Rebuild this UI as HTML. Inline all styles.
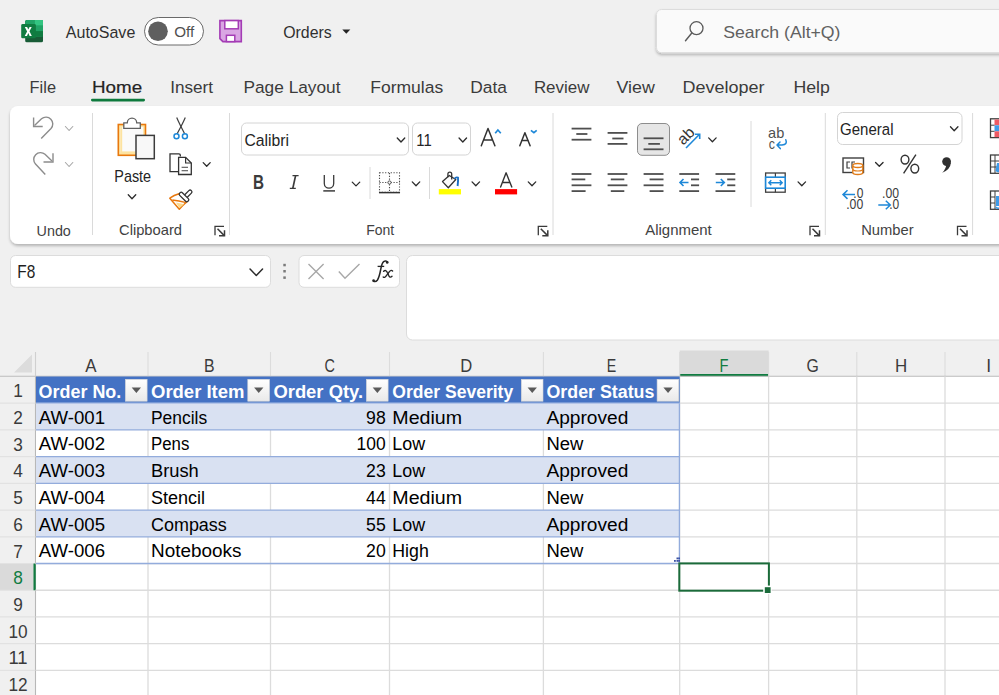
<!DOCTYPE html><html><head><meta charset="utf-8"><style>html,body{margin:0;padding:0;background:#f0f0f0;overflow:hidden}svg{display:block}</style></head><body>
<svg width="999" height="695" viewBox="0 0 999 695">
<defs><filter id="sh" x="-5%" y="-20%" width="110%" height="140%"><feGaussianBlur in="SourceAlpha" stdDeviation="1.5"/><feOffset dy="1.5"/><feComponentTransfer><feFuncA type="linear" slope="0.25"/></feComponentTransfer><feMerge><feMergeNode/><feMergeNode in="SourceGraphic"/></feMerge></filter><linearGradient id="fbtn" x1="0" y1="0" x2="0" y2="1"><stop offset="0" stop-color="#ffffff"/><stop offset="1" stop-color="#e9e9e9"/></linearGradient></defs>
<rect x="0" y="0" width="999" height="695" fill="#f0f0f0" stroke="none" stroke-width="1" rx="0" />
<rect x="25.2" y="20" width="17.8" height="22.3" fill="#185c37" stroke="none" stroke-width="1" rx="1.6" />
<rect x="25.2" y="20" width="17.8" height="16.5" fill="#21a366" stroke="none" stroke-width="1" rx="1.6" />
<rect x="34.9" y="20" width="8.1" height="5.6" fill="#33c481" stroke="none" stroke-width="1" rx="0" />
<rect x="34.9" y="25.6" width="8.1" height="5.5" fill="#21a366" stroke="none" stroke-width="1" rx="0" />
<rect x="34.9" y="31.1" width="8.1" height="5.4" fill="#107c41" stroke="none" stroke-width="1" rx="0" />
<rect x="21.2" y="24" width="14.7" height="14.3" fill="#107c41" stroke="none" stroke-width="1" rx="1.4" />
<path d="M24.8 26.9 H27.1 L28.3 29.6 L29.6 26.9 H31.7 L29.5 31.3 L31.8 35.9 H29.6 L28.3 33.1 L27 35.9 H24.7 L27.1 31.4 Z" fill="#ffffff" stroke="none" stroke-width="1" />
<text x="65.8" y="37.6" font-size="16.3" fill="#303030" font-weight="normal" font-style="normal" text-anchor="start" font-family='"Liberation Sans", sans-serif' textLength="69.5" lengthAdjust="spacingAndGlyphs" >AutoSave</text>
<rect x="144.5" y="17.5" width="59" height="27.5" fill="#ffffff" stroke="#6a6a6a" stroke-width="1" rx="13.75" />
<circle cx="158" cy="31.2" r="9.8" fill="#5f5f5f"/>
<text x="174.3" y="37" font-size="14.8" fill="#505050" font-weight="normal" font-style="normal" text-anchor="start" font-family='"Liberation Sans", sans-serif' textLength="20" lengthAdjust="spacingAndGlyphs" >Off</text>
<path d="M219.9 20.6 H241.3 V41.6 H222.9 L219.9 38.6 Z" fill="#d9a6e3" stroke="#a43cb5" stroke-width="1.6" />
<rect x="224.8" y="20.6" width="13.5" height="8.2" fill="#ffffff" stroke="#a43cb5" stroke-width="1.5" rx="0" />
<rect x="226.4" y="35.3" width="8.4" height="6.3" fill="#ffffff" stroke="#a43cb5" stroke-width="1.5" rx="0" />
<text x="283.2" y="37.5" font-size="16.3" fill="#303030" font-weight="normal" font-style="normal" text-anchor="start" font-family='"Liberation Sans", sans-serif' textLength="48.5" lengthAdjust="spacingAndGlyphs" >Orders</text>
<path d="M342.3 29.5 H350.3 L346.3 33.8 Z" fill="#242424" stroke="none" stroke-width="1" />
<rect x="656.5" y="9.5" width="360" height="43.2" fill="#fafafa" stroke="#dcdcdc" stroke-width="1" rx="5" filter="url(#sh)"/>
<circle cx="696.5" cy="28.2" r="6.5" fill="none" stroke="#5a5a5a" stroke-width="1.3"/>
<line x1="691.8" y1="33" x2="685.5" y2="40.8" stroke="#5a5a5a" stroke-width="1.4" stroke-linecap="round"/>
<text x="723.2" y="38.4" font-size="16.5" fill="#616161" font-weight="normal" font-style="normal" text-anchor="start" font-family='"Liberation Sans", sans-serif' textLength="117.3" lengthAdjust="spacingAndGlyphs" >Search (Alt+Q)</text>
<text x="29.6" y="92.8" font-size="16.8" fill="#3b3b3b" font-weight="normal" font-style="normal" text-anchor="start" font-family='"Liberation Sans", sans-serif' textLength="26.4" lengthAdjust="spacingAndGlyphs" >File</text>
<text x="92" y="92.8" font-size="16.8" fill="#242424" font-weight="normal" font-style="normal" text-anchor="start" font-family='"Liberation Sans", sans-serif' textLength="50.2" lengthAdjust="spacingAndGlyphs" stroke="#242424" stroke-width="0.2">Home</text>
<text x="170.2" y="92.8" font-size="16.8" fill="#3b3b3b" font-weight="normal" font-style="normal" text-anchor="start" font-family='"Liberation Sans", sans-serif' textLength="42.8" lengthAdjust="spacingAndGlyphs" >Insert</text>
<text x="243.5" y="92.8" font-size="16.8" fill="#3b3b3b" font-weight="normal" font-style="normal" text-anchor="start" font-family='"Liberation Sans", sans-serif' textLength="97" lengthAdjust="spacingAndGlyphs" >Page Layout</text>
<text x="370.2" y="92.8" font-size="16.8" fill="#3b3b3b" font-weight="normal" font-style="normal" text-anchor="start" font-family='"Liberation Sans", sans-serif' textLength="73" lengthAdjust="spacingAndGlyphs" >Formulas</text>
<text x="470.2" y="92.8" font-size="16.8" fill="#3b3b3b" font-weight="normal" font-style="normal" text-anchor="start" font-family='"Liberation Sans", sans-serif' textLength="36.7" lengthAdjust="spacingAndGlyphs" >Data</text>
<text x="533.9" y="92.8" font-size="16.8" fill="#3b3b3b" font-weight="normal" font-style="normal" text-anchor="start" font-family='"Liberation Sans", sans-serif' textLength="55.5" lengthAdjust="spacingAndGlyphs" >Review</text>
<text x="616.5" y="92.8" font-size="16.8" fill="#3b3b3b" font-weight="normal" font-style="normal" text-anchor="start" font-family='"Liberation Sans", sans-serif' textLength="38.3" lengthAdjust="spacingAndGlyphs" >View</text>
<text x="682.5" y="92.8" font-size="16.8" fill="#3b3b3b" font-weight="normal" font-style="normal" text-anchor="start" font-family='"Liberation Sans", sans-serif' textLength="82" lengthAdjust="spacingAndGlyphs" >Developer</text>
<text x="793.5" y="92.8" font-size="16.8" fill="#3b3b3b" font-weight="normal" font-style="normal" text-anchor="start" font-family='"Liberation Sans", sans-serif' textLength="36.4" lengthAdjust="spacingAndGlyphs" >Help</text>
<rect x="91" y="98.8" width="54" height="2.6" fill="#0e7a3d" stroke="none" stroke-width="1" rx="1.3" />
<rect x="10" y="106" width="1100" height="138" fill="#ffffff" stroke="none" stroke-width="1" rx="8" filter="url(#sh)"/>
<path d="M33.6 117.5 V126.5 H42.7" fill="none" stroke="#8c8c8c" stroke-width="1.4" />
<path d="M34.5 125.5 L41.5 118.8 A6.8 6.8 0 0 1 51 128.5 L41.2 138.5" fill="none" stroke="#8c8c8c" stroke-width="1.4" />
<path d="M65.39999999999999 126.5 L69.1 130.5 L72.8 126.5" fill="none" stroke="#a6a6a6" stroke-width="1.1" stroke-linecap="round" stroke-linejoin="round"/>
<path d="M53 153.3 V162 H43.5" fill="none" stroke="#8c8c8c" stroke-width="1.4" />
<path d="M52 161 L45 154.3 A6.8 6.8 0 0 0 35.5 164 L45.3 174.5" fill="none" stroke="#8c8c8c" stroke-width="1.4" />
<path d="M65.39999999999999 162.5 L69.1 166.5 L72.8 162.5" fill="none" stroke="#a6a6a6" stroke-width="1.1" stroke-linecap="round" stroke-linejoin="round"/>
<text x="53.7" y="235.7" font-size="14.6" fill="#424242" font-weight="normal" font-style="normal" text-anchor="middle" font-family='"Liberation Sans", sans-serif' textLength="34.3" lengthAdjust="spacingAndGlyphs" >Undo</text>
<line x1="92.5" y1="113" x2="92.5" y2="235" stroke="#dadada" stroke-width="1" />
<rect x="118.3" y="124.5" width="27.2" height="30.8" fill="#fde3a0" stroke="#e8780e" stroke-width="1.6" rx="0" />
<rect x="120.6" y="126.8" width="22.6" height="26.2" fill="#fafafa" stroke="none" stroke-width="1" rx="0" />
<rect x="120.6" y="126.8" width="1.6" height="26.2" fill="#fde3a0" stroke="none" stroke-width="1" rx="0" />
<rect x="120.6" y="151.4" width="15" height="1.6" fill="#fde3a0" stroke="none" stroke-width="1" rx="0" />
<path d="M123.8 128.3 V122.8 H127.3 A4.7 4.7 0 0 1 136.7 122.8 H140.3 V128.3 Z" fill="#ffffff" stroke="#606060" stroke-width="1.3" />
<rect x="136" y="135.4" width="18.3" height="23.3" fill="#f8f8f8" stroke="#3c3c3c" stroke-width="1.5" rx="0" />
<text x="132.7" y="181.6" font-size="16.2" fill="#242424" font-weight="normal" font-style="normal" text-anchor="middle" font-family='"Liberation Sans", sans-serif' textLength="36.8" lengthAdjust="spacingAndGlyphs" >Paste</text>
<path d="M128.25 194.8 L132 198.8 L135.75 194.8" fill="none" stroke="#2b2b2b" stroke-width="1.3" stroke-linecap="round" stroke-linejoin="round"/>
<path d="M176.7 117.5 Q179 123 184.8 134" fill="none" stroke="#3f3f3f" stroke-width="1.2" />
<path d="M185.3 117.5 Q183 123 177 134" fill="none" stroke="#3f3f3f" stroke-width="1.2" />
<circle cx="176.5" cy="136.2" r="2.5" fill="none" stroke="#1e88d8" stroke-width="1.5"/>
<circle cx="184.9" cy="136.2" r="2.5" fill="none" stroke="#1e88d8" stroke-width="1.5"/>
<path d="M180.3 156.5 V155 Q180.3 153.9 179 153.9 H170 V171.6 H178" fill="none" stroke="#333" stroke-width="1.3" />
<path d="M178.6 157.3 H185.6 L191.3 163 V174.5 H178.6 Z" fill="#ffffff" stroke="#333" stroke-width="1.3" />
<path d="M185.6 157.3 V163 H191.3" fill="none" stroke="#333" stroke-width="1.2" />
<line x1="181.6" y1="167.3" x2="188" y2="167.3" stroke="#555" stroke-width="1.1" />
<line x1="181.6" y1="170.7" x2="188" y2="170.7" stroke="#555" stroke-width="1.1" />
<path d="M203.2 162.6 L206.7 166.20000000000002 L210.2 162.6" fill="none" stroke="#2b2b2b" stroke-width="1.3" stroke-linecap="round" stroke-linejoin="round"/>
<path d="M169.8 198.2 Q174 195.2 179 193.8 L186.9 201.8 Q183.2 205 179.3 209.2 Z" fill="#ffffff" stroke="#e8780e" stroke-width="1.5" stroke-linejoin="round"/>
<path d="M176 202.6 L184 204.2 L179.4 208.3 Z" fill="#fcd98c" stroke="none" stroke-width="1" />
<path d="M172.3 200 Q178.5 200.8 186.3 202.6" fill="none" stroke="#e8780e" stroke-width="1.4" />
<rect x="183.7" y="192" width="9" height="3.6" rx="1.8" fill="#ffffff" stroke="#333" stroke-width="1.3" transform="rotate(-45 188.2 193.8)"/>
<rect x="178.2" y="195.1" width="11.6" height="3.8" rx="1.6" fill="#ffffff" stroke="#333" stroke-width="1.3" transform="rotate(45 184 197)"/>
<text x="150.5" y="235" font-size="14.6" fill="#424242" font-weight="normal" font-style="normal" text-anchor="middle" font-family='"Liberation Sans", sans-serif' textLength="63" lengthAdjust="spacingAndGlyphs" >Clipboard</text>
<path d="M215.0 235.3 V226.3 H224.0" fill="none" stroke="#3a3a3a" stroke-width="1.3" />
<line x1="217.5" y1="228.8" x2="224.3" y2="235.60000000000002" stroke="#3a3a3a" stroke-width="1.5" />
<path d="M224.5 230.3 V235.8 H219.0" fill="none" stroke="#3a3a3a" stroke-width="1.5" />
<line x1="229.5" y1="113" x2="229.5" y2="235" stroke="#dadada" stroke-width="1" />
<rect x="241.5" y="123" width="167" height="32" fill="#ffffff" stroke="#d4d4d4" stroke-width="1" rx="5" />
<text x="244.4" y="145.6" font-size="17.2" fill="#242424" font-weight="normal" font-style="normal" text-anchor="start" font-family='"Liberation Sans", sans-serif' textLength="44.6" lengthAdjust="spacingAndGlyphs" >Calibri</text>
<path d="M397.25 138.0 L401 142.0 L404.75 138.0" fill="none" stroke="#2b2b2b" stroke-width="1.3" stroke-linecap="round" stroke-linejoin="round"/>
<rect x="412.5" y="123" width="58" height="32" fill="#ffffff" stroke="#d4d4d4" stroke-width="1" rx="5" />
<text x="416.3" y="146" font-size="17.2" fill="#242424" font-weight="normal" font-style="normal" text-anchor="start" font-family='"Liberation Sans", sans-serif' textLength="15.4" lengthAdjust="spacingAndGlyphs" >11</text>
<path d="M459.05 138.0 L462.8 142.0 L466.55 138.0" fill="none" stroke="#2b2b2b" stroke-width="1.3" stroke-linecap="round" stroke-linejoin="round"/>
<path d="M481.3 145.8 L488 128.5 L494.9 145.8 M483.8 139.9 H492.4" fill="none" stroke="#333" stroke-width="1.5" stroke-linecap="round" stroke-linejoin="round"/>
<path d="M495.2 133.2 L497.9 130 L500.8 133.2" fill="none" stroke="#1e88d8" stroke-width="1.7" />
<path d="M519.8 145.8 L524.9 132.7 L530.1 145.8 M521.7 140.6 H528.2" fill="none" stroke="#333" stroke-width="1.5" stroke-linecap="round" stroke-linejoin="round"/>
<path d="M530.9 130.3 L533.9 132.6 L536.7 130.3" fill="none" stroke="#1e88d8" stroke-width="1.7" />
<text x="258.5" y="189" font-size="19.8" fill="#3b3b3b" font-weight="bold" font-style="normal" text-anchor="middle" font-family='"Liberation Sans", sans-serif' textLength="11" lengthAdjust="spacingAndGlyphs" >B</text>
<path d="M292.5 175.6 H298.6 M289.8 188.4 H295.8" fill="none" stroke="#3b3b3b" stroke-width="1.2" />
<path d="M295.6 175.6 L292.8 188.4" fill="none" stroke="#3b3b3b" stroke-width="1.7" />
<path d="M324.3 175 V183.5 A4.7 4.7 0 0 0 333.7 183.5 V175" fill="none" stroke="#3b3b3b" stroke-width="1.3" />
<line x1="323.3" y1="190.9" x2="335" y2="190.9" stroke="#3b3b3b" stroke-width="1.5" />
<path d="M352.25 182.1 L356 185.9 L359.75 182.1" fill="none" stroke="#2b2b2b" stroke-width="1.3" stroke-linecap="round" stroke-linejoin="round"/>
<line x1="370" y1="167" x2="370" y2="199" stroke="#dadada" stroke-width="1" />
<rect x="379.5" y="172.8" width="20" height="19.5" fill="none" stroke="#4a4a4a" stroke-width="1.1" rx="0" stroke-dasharray="1.2 1.6"/>
<line x1="389.5" y1="173" x2="389.5" y2="192" stroke="#4a4a4a" stroke-width="1.1" stroke-dasharray="1.2 1.6"/>
<line x1="379.5" y1="182.5" x2="399.5" y2="182.5" stroke="#4a4a4a" stroke-width="1.1" stroke-dasharray="1.2 1.6"/>
<circle cx="389.5" cy="182.5" r="1.6" fill="#fff" stroke="#4a4a4a" stroke-width="1"/>
<line x1="379" y1="192.6" x2="400" y2="192.6" stroke="#333" stroke-width="1.5" />
<path d="M412.25 181.9 L416 185.70000000000002 L419.75 181.9" fill="none" stroke="#2b2b2b" stroke-width="1.3" stroke-linecap="round" stroke-linejoin="round"/>
<line x1="429.5" y1="167" x2="429.5" y2="199" stroke="#dadada" stroke-width="1" />
<path d="M442.5 181.6 L449.3 175.5 L455.8 179.5 L448.3 187.8 Z" fill="#fafafa" stroke="#333" stroke-width="1.3" stroke-linejoin="round"/>
<path d="M447.9 177.2 V174 A1.9 1.9 0 0 1 451.7 174 V179.5" fill="none" stroke="#333" stroke-width="1.3" />
<path d="M454.6 178.8 A2.8 2.8 0 0 1 458 177.6 Q458.3 181 457.6 186" fill="none" stroke="#1a6fc4" stroke-width="1.9" />
<rect x="438.8" y="189.1" width="22.2" height="5.3" fill="#ffff00" stroke="none" stroke-width="1" rx="0" />
<path d="M472.05 181.9 L475.8 185.70000000000002 L479.55 181.9" fill="none" stroke="#2b2b2b" stroke-width="1.3" stroke-linecap="round" stroke-linejoin="round"/>
<path d="M500.6 187 L506.1 172.8 L511.8 187 M502.4 182.5 H509.8" fill="none" stroke="#333" stroke-width="1.4" stroke-linecap="round" stroke-linejoin="round"/>
<rect x="495" y="189.1" width="22.1" height="5.3" fill="#ff0000" stroke="none" stroke-width="1" rx="0" />
<path d="M528.25 181.9 L532 185.70000000000002 L535.75 181.9" fill="none" stroke="#2b2b2b" stroke-width="1.3" stroke-linecap="round" stroke-linejoin="round"/>
<text x="380.2" y="234.8" font-size="14.6" fill="#424242" font-weight="normal" font-style="normal" text-anchor="middle" font-family='"Liberation Sans", sans-serif' textLength="28" lengthAdjust="spacingAndGlyphs" >Font</text>
<path d="M538.3 235.3 V226.3 H547.3" fill="none" stroke="#3a3a3a" stroke-width="1.3" />
<line x1="540.8" y1="228.8" x2="547.5999999999999" y2="235.60000000000002" stroke="#3a3a3a" stroke-width="1.5" />
<path d="M547.8 230.3 V235.8 H542.3" fill="none" stroke="#3a3a3a" stroke-width="1.5" />
<line x1="553" y1="113" x2="553" y2="235" stroke="#dadada" stroke-width="1" />
<line x1="571.6" y1="128.6" x2="591.4" y2="128.6" stroke="#4f4f4f" stroke-width="1.8" />
<line x1="576.3" y1="134" x2="587.4" y2="134" stroke="#4f4f4f" stroke-width="1.8" />
<line x1="571.6" y1="139.7" x2="591.4" y2="139.7" stroke="#4f4f4f" stroke-width="1.8" />
<line x1="607.6" y1="132.9" x2="627.4" y2="132.9" stroke="#4f4f4f" stroke-width="1.8" />
<line x1="612.3" y1="138.5" x2="623.5" y2="138.5" stroke="#4f4f4f" stroke-width="1.8" />
<line x1="607.6" y1="143.9" x2="627.4" y2="143.9" stroke="#4f4f4f" stroke-width="1.8" />
<rect x="637.5" y="123.5" width="32" height="31.8" fill="#e6e6e6" stroke="#8d8d8d" stroke-width="1" rx="4.5" />
<line x1="643.6" y1="138.3" x2="663.5" y2="138.3" stroke="#4f4f4f" stroke-width="1.8" />
<line x1="648.3" y1="143.9" x2="659.9" y2="143.9" stroke="#4f4f4f" stroke-width="1.8" />
<line x1="643.6" y1="149.3" x2="663.5" y2="149.3" stroke="#4f4f4f" stroke-width="1.8" />
<text x="686" y="141" font-size="15.5" fill="#333" font-weight="normal" font-style="normal" text-anchor="middle" font-family='"Liberation Sans", sans-serif' textLength="17.5" lengthAdjust="spacingAndGlyphs" transform="rotate(-45 686 136)">ab</text>
<line x1="686" y1="148" x2="699.3" y2="134.5" stroke="#1e88d8" stroke-width="1.6" />
<path d="M695 134.3 H699.7 V139" fill="none" stroke="#1e88d8" stroke-width="1.6" />
<path d="M708.65 137.9 L712.4 141.70000000000002 L716.15 137.9" fill="none" stroke="#2b2b2b" stroke-width="1.3" stroke-linecap="round" stroke-linejoin="round"/>
<line x1="571.6" y1="174" x2="591.4" y2="174" stroke="#4f4f4f" stroke-width="1.8" />
<line x1="571.6" y1="179.4" x2="585.3" y2="179.4" stroke="#4f4f4f" stroke-width="1.8" />
<line x1="571.6" y1="185.3" x2="591.4" y2="185.3" stroke="#4f4f4f" stroke-width="1.8" />
<line x1="571.6" y1="191.1" x2="585.6" y2="191.1" stroke="#4f4f4f" stroke-width="1.8" />
<line x1="607.6" y1="174" x2="627.4" y2="174" stroke="#4f4f4f" stroke-width="1.8" />
<line x1="610.8" y1="179.4" x2="624.3" y2="179.4" stroke="#4f4f4f" stroke-width="1.8" />
<line x1="607.6" y1="185.3" x2="627.4" y2="185.3" stroke="#4f4f4f" stroke-width="1.8" />
<line x1="610.8" y1="191.1" x2="624.3" y2="191.1" stroke="#4f4f4f" stroke-width="1.8" />
<line x1="643.6" y1="174" x2="663.5" y2="174" stroke="#4f4f4f" stroke-width="1.8" />
<line x1="649.6" y1="179.4" x2="663.5" y2="179.4" stroke="#4f4f4f" stroke-width="1.8" />
<line x1="643.6" y1="185.3" x2="663.5" y2="185.3" stroke="#4f4f4f" stroke-width="1.8" />
<line x1="649.6" y1="191.1" x2="663.5" y2="191.1" stroke="#4f4f4f" stroke-width="1.8" />
<line x1="679.3" y1="174" x2="699.1" y2="174" stroke="#4f4f4f" stroke-width="1.8" />
<line x1="691" y1="179.4" x2="699.1" y2="179.4" stroke="#4f4f4f" stroke-width="1.8" />
<line x1="691" y1="185.3" x2="699.1" y2="185.3" stroke="#4f4f4f" stroke-width="1.8" />
<line x1="679.3" y1="191.1" x2="699.1" y2="191.1" stroke="#4f4f4f" stroke-width="1.8" />
<path d="M680 182.5 H688.5 M683.5 179 L680 182.5 L683.5 186" fill="none" stroke="#1e88d8" stroke-width="1.6" />
<line x1="715.5" y1="174" x2="735.3" y2="174" stroke="#4f4f4f" stroke-width="1.8" />
<line x1="727.2" y1="179.4" x2="735.3" y2="179.4" stroke="#4f4f4f" stroke-width="1.8" />
<line x1="727.2" y1="185.3" x2="735.3" y2="185.3" stroke="#4f4f4f" stroke-width="1.8" />
<line x1="715.5" y1="191.1" x2="735.3" y2="191.1" stroke="#4f4f4f" stroke-width="1.8" />
<path d="M715.8 182.5 H724.3 M720.8 179 L724.3 182.5 L720.8 186" fill="none" stroke="#1e88d8" stroke-width="1.6" />
<line x1="751" y1="121" x2="751" y2="207" stroke="#dadada" stroke-width="1" />
<text x="776.2" y="138.2" font-size="14.8" fill="#505050" font-weight="normal" font-style="normal" text-anchor="middle" font-family='"Liberation Sans", sans-serif' textLength="16.2" lengthAdjust="spacingAndGlyphs" >ab</text>
<text x="771.8" y="148.8" font-size="14.8" fill="#505050" font-weight="normal" font-style="normal" text-anchor="middle" font-family='"Liberation Sans", sans-serif' textLength="6.2" lengthAdjust="spacingAndGlyphs" >c</text>
<path d="M785.8 139.8 Q787.8 144.5 782 145 H777.2 M780 142 L777 145 L780.3 148.6" fill="none" stroke="#1e88d8" stroke-width="1.5" stroke-linecap="round" stroke-linejoin="round"/>
<rect x="765.6" y="173" width="19.6" height="19.2" fill="none" stroke="#3f3f3f" stroke-width="1.3" rx="0" />
<line x1="775.4" y1="173" x2="775.4" y2="178" stroke="#3f3f3f" stroke-width="1.2" />
<line x1="775.4" y1="188" x2="775.4" y2="192.2" stroke="#3f3f3f" stroke-width="1.2" />
<rect x="765.6" y="177.2" width="19.6" height="11" fill="#ffffff" stroke="#1e88d8" stroke-width="1.6" rx="0" />
<path d="M768.8 182.7 H782.2 M771.3 180.2 L768.8 182.7 L771.3 185.2 M779.7 180.2 L782.2 182.7 L779.7 185.2" fill="none" stroke="#1e88d8" stroke-width="1.4" />
<path d="M798.05 181.9 L801.8 185.70000000000002 L805.55 181.9" fill="none" stroke="#2b2b2b" stroke-width="1.3" stroke-linecap="round" stroke-linejoin="round"/>
<text x="678.5" y="234.8" font-size="14.6" fill="#424242" font-weight="normal" font-style="normal" text-anchor="middle" font-family='"Liberation Sans", sans-serif' textLength="66.5" lengthAdjust="spacingAndGlyphs" >Alignment</text>
<path d="M810.0 235.3 V226.3 H819.0" fill="none" stroke="#3a3a3a" stroke-width="1.3" />
<line x1="812.5" y1="228.8" x2="819.3" y2="235.60000000000002" stroke="#3a3a3a" stroke-width="1.5" />
<path d="M819.5 230.3 V235.8 H814.0" fill="none" stroke="#3a3a3a" stroke-width="1.5" />
<line x1="825.3" y1="113" x2="825.3" y2="235" stroke="#dadada" stroke-width="1" />
<rect x="837.5" y="112.5" width="124.5" height="32" fill="#ffffff" stroke="#d4d4d4" stroke-width="1" rx="5" />
<text x="840.1" y="134.6" font-size="17.2" fill="#242424" font-weight="normal" font-style="normal" text-anchor="start" font-family='"Liberation Sans", sans-serif' textLength="53.4" lengthAdjust="spacingAndGlyphs" >General</text>
<path d="M950.45 126.69999999999999 L954.2 130.7 L957.95 126.69999999999999" fill="none" stroke="#2b2b2b" stroke-width="1.3" stroke-linecap="round" stroke-linejoin="round"/>
<rect x="843" y="158" width="20.5" height="14.5" fill="#ffffff" stroke="#3f3f3f" stroke-width="1.4" rx="0" />
<path d="M850 162 H847 V168 H850 M855 162 H852 V168 H855" fill="none" stroke="#3f3f3f" stroke-width="1.2" />
<path d="M852.8 165.5 V172.5 A5 2 0 0 0 862.8 172.5 V165.5" fill="#ffffff" stroke="#e07c1a" stroke-width="1.4" />
<ellipse cx="857.8" cy="165.5" rx="5" ry="2" fill="#ffffff" stroke="#e07c1a" stroke-width="1.4"/>
<path d="M852.8 169 A5 2 0 0 0 862.8 169" fill="none" stroke="#e07c1a" stroke-width="1.2" />
<path d="M875.55 162.5 L879.3 166.3 L883.05 162.5" fill="none" stroke="#2b2b2b" stroke-width="1.3" stroke-linecap="round" stroke-linejoin="round"/>
<ellipse cx="905" cy="159.6" rx="3.9" ry="4.4" fill="none" stroke="#333" stroke-width="1.4"/><ellipse cx="914.8" cy="168.6" rx="3.9" ry="4.4" fill="none" stroke="#333" stroke-width="1.4"/>
<line x1="915.9" y1="154.6" x2="903.6" y2="173.4" stroke="#333" stroke-width="1.4" />
<circle cx="946.6" cy="161.6" r="4.4" fill="#2f2f2f"/>
<path d="M950.9 162.5 Q950.5 169.5 942.2 172.8 Q946.5 168.5 946.2 164 Z" fill="#2f2f2f" stroke="none" stroke-width="1" />
<text x="858.3" y="198.3" font-size="14.8" fill="#3b3b3b" font-weight="normal" font-style="normal" text-anchor="middle" font-family='"Liberation Sans", sans-serif' textLength="10" lengthAdjust="spacingAndGlyphs" >.0</text>
<text x="854.7" y="208.8" font-size="14.8" fill="#3b3b3b" font-weight="normal" font-style="normal" text-anchor="middle" font-family='"Liberation Sans", sans-serif' textLength="17" lengthAdjust="spacingAndGlyphs" >.00</text>
<path d="M843 194.6 H855 M847.5 190.3 L843 194.6 L847.5 198.9" fill="none" stroke="#1e88d8" stroke-width="1.5" />
<text x="890.5" y="198.3" font-size="14.8" fill="#3b3b3b" font-weight="normal" font-style="normal" text-anchor="middle" font-family='"Liberation Sans", sans-serif' textLength="17" lengthAdjust="spacingAndGlyphs" >.00</text>
<text x="894.2" y="208.8" font-size="14.8" fill="#3b3b3b" font-weight="normal" font-style="normal" text-anchor="middle" font-family='"Liberation Sans", sans-serif' textLength="10" lengthAdjust="spacingAndGlyphs" >.0</text>
<path d="M878.3 205 H890.3 M885.8 200.7 L890.3 205 L885.8 209.3" fill="none" stroke="#1e88d8" stroke-width="1.5" />
<text x="887.4" y="235" font-size="14.6" fill="#424242" font-weight="normal" font-style="normal" text-anchor="middle" font-family='"Liberation Sans", sans-serif' textLength="52.4" lengthAdjust="spacingAndGlyphs" >Number</text>
<path d="M957.5 235.3 V226.3 H966.5" fill="none" stroke="#3a3a3a" stroke-width="1.3" />
<line x1="960" y1="228.8" x2="966.8" y2="235.60000000000002" stroke="#3a3a3a" stroke-width="1.5" />
<path d="M967 230.3 V235.8 H961.5" fill="none" stroke="#3a3a3a" stroke-width="1.5" />
<line x1="972.6" y1="113" x2="972.6" y2="235" stroke="#dadada" stroke-width="1" />
<rect x="990.5" y="118.8" width="12" height="18.8" fill="#ffffff" stroke="#3f3f3f" stroke-width="1.3" rx="0" />
<rect x="994.5" y="119.5" width="6" height="5.8" fill="#ee5a64" stroke="none" stroke-width="1" rx="0" />
<rect x="994.5" y="125.3" width="6" height="6" fill="#3d9be9" stroke="none" stroke-width="1" rx="0" />
<rect x="994.5" y="131.3" width="6" height="5.8" fill="#ee5a64" stroke="none" stroke-width="1" rx="0" />
<line x1="990.5" y1="125.2" x2="994.5" y2="125.2" stroke="#3f3f3f" stroke-width="1" />
<line x1="990.5" y1="131.3" x2="994.5" y2="131.3" stroke="#3f3f3f" stroke-width="1" />
<rect x="990.5" y="155" width="12" height="18.3" fill="#ffffff" stroke="#3f3f3f" stroke-width="1.3" rx="0" />
<line x1="990.5" y1="161" x2="1003" y2="161" stroke="#3f3f3f" stroke-width="1" />
<line x1="990.5" y1="167" x2="1003" y2="167" stroke="#3f3f3f" stroke-width="1" />
<line x1="995" y1="155" x2="995" y2="173" stroke="#3f3f3f" stroke-width="1" />
<path d="M995.5 171 Q999 174 1003 170 V163 H997 Z" fill="#3d9be9" stroke="none" stroke-width="1" />
<rect x="990.5" y="191" width="12" height="18.3" fill="#ffffff" stroke="#3f3f3f" stroke-width="1.3" rx="0" />
<line x1="995" y1="191" x2="995" y2="209" stroke="#3f3f3f" stroke-width="1" />
<line x1="990.5" y1="197" x2="995" y2="197" stroke="#3f3f3f" stroke-width="1" />
<line x1="990.5" y1="203" x2="995" y2="203" stroke="#3f3f3f" stroke-width="1" />
<rect x="996" y="196" width="6" height="10" fill="#3d9be9" stroke="none" stroke-width="1" rx="0" />
<path d="M995.5 207 Q999 210 1003 206" fill="none" stroke="#3d9be9" stroke-width="1.5" />
<rect x="10.5" y="255.5" width="260" height="31.8" fill="#ffffff" stroke="#dcdcdc" stroke-width="1" rx="5" />
<text x="17.3" y="278.2" font-size="17.8" fill="#1f1f1f" font-weight="normal" font-style="normal" text-anchor="start" font-family='"Liberation Sans", sans-serif' textLength="18" lengthAdjust="spacingAndGlyphs" >F8</text>
<path d="M250.05 269.05 L256.3 275.55 L262.55 269.05" fill="none" stroke="#2b2b2b" stroke-width="1.5" stroke-linecap="round" stroke-linejoin="round"/>
<rect x="283.3" y="263.8" width="2.5" height="2.5" fill="#7a7a7a" stroke="none" stroke-width="1" rx="0" />
<rect x="283.3" y="270.0" width="2.5" height="2.5" fill="#7a7a7a" stroke="none" stroke-width="1" rx="0" />
<rect x="283.3" y="276.40000000000003" width="2.5" height="2.5" fill="#7a7a7a" stroke="none" stroke-width="1" rx="0" />
<rect x="299" y="255.5" width="100.5" height="31.8" fill="#ffffff" stroke="#dcdcdc" stroke-width="1" rx="5" />
<path d="M308.5 264 L323.6 279 M323.6 264 L308.5 279" fill="none" stroke="#a8a8a8" stroke-width="1.4" />
<path d="M338.8 271.5 L345 278.3 L359.5 264" fill="none" stroke="#a8a8a8" stroke-width="1.4" />
<path d="M387.6 262.2 Q386 259.9 383.6 261.6 Q381.8 263.2 380.7 269.5 Q379.3 277.3 377.3 280.2 Q375.6 282.4 373.3 281.1" fill="none" stroke="#262626" stroke-width="1.5" stroke-linecap="round"/>
<circle cx="387.2" cy="262.4" r="1.3" fill="#262626"/><circle cx="373.6" cy="280.6" r="1.3" fill="#262626"/>
<line x1="377.6" y1="266.4" x2="384.2" y2="266.4" stroke="#262626" stroke-width="1.3" />
<path d="M383.6 271.3 Q385.9 269.3 387.2 272.3 L388.9 275.8 Q390.2 278.2 392 276.3" fill="none" stroke="#262626" stroke-width="1.4" stroke-linecap="round"/>
<path d="M392.6 271 Q391.2 269.6 389.6 271.4 L386.2 275.9 Q384.6 278.2 383.2 276.9" fill="none" stroke="#262626" stroke-width="1.4" stroke-linecap="round"/>
<rect x="406.5" y="255.5" width="700" height="84.5" fill="#ffffff" stroke="#dcdcdc" stroke-width="1" rx="6" />
<rect x="35.5" y="376.5" width="999" height="695" fill="#ffffff" stroke="none" stroke-width="1" rx="0" />
<rect x="679.7" y="350.5" width="88.89999999999998" height="26.0" fill="#dadada" stroke="none" stroke-width="1" rx="0" />
<line x1="679.7" y1="375.2" x2="768.6" y2="375.2" stroke="#107c41" stroke-width="2.2" />
<line x1="148.0" y1="352" x2="148.0" y2="376.5" stroke="#dcdcdc" stroke-width="1.1" />
<line x1="270.5" y1="352" x2="270.5" y2="376.5" stroke="#dcdcdc" stroke-width="1.1" />
<line x1="389.5" y1="352" x2="389.5" y2="376.5" stroke="#dcdcdc" stroke-width="1.1" />
<line x1="543.4" y1="352" x2="543.4" y2="376.5" stroke="#dcdcdc" stroke-width="1.1" />
<line x1="679.7" y1="352" x2="679.7" y2="376.5" stroke="#dcdcdc" stroke-width="1.1" />
<line x1="768.6" y1="352" x2="768.6" y2="376.5" stroke="#dcdcdc" stroke-width="1.1" />
<line x1="856.8" y1="352" x2="856.8" y2="376.5" stroke="#dcdcdc" stroke-width="1.1" />
<line x1="945.0" y1="352" x2="945.0" y2="376.5" stroke="#dcdcdc" stroke-width="1.1" />
<line x1="1033.5" y1="352" x2="1033.5" y2="376.5" stroke="#dcdcdc" stroke-width="1.1" />
<line x1="0" y1="376.3" x2="999" y2="376.3" stroke="#bdbdbd" stroke-width="1.1" />
<rect x="0" y="563.52" width="35.5" height="26.720000000000027" fill="#dadada" stroke="none" stroke-width="1" rx="0" />
<line x1="0" y1="403.2" x2="35" y2="403.2" stroke="#e2e2e2" stroke-width="1.2" />
<line x1="0" y1="429.91999999999996" x2="35" y2="429.91999999999996" stroke="#e2e2e2" stroke-width="1.2" />
<line x1="0" y1="456.64" x2="35" y2="456.64" stroke="#e2e2e2" stroke-width="1.2" />
<line x1="0" y1="483.36" x2="35" y2="483.36" stroke="#e2e2e2" stroke-width="1.2" />
<line x1="0" y1="510.08" x2="35" y2="510.08" stroke="#e2e2e2" stroke-width="1.2" />
<line x1="0" y1="536.8" x2="35" y2="536.8" stroke="#e2e2e2" stroke-width="1.2" />
<line x1="0" y1="563.52" x2="35" y2="563.52" stroke="#e2e2e2" stroke-width="1.2" />
<line x1="0" y1="590.24" x2="35" y2="590.24" stroke="#e2e2e2" stroke-width="1.2" />
<line x1="0" y1="616.96" x2="35" y2="616.96" stroke="#e2e2e2" stroke-width="1.2" />
<line x1="0" y1="643.68" x2="35" y2="643.68" stroke="#e2e2e2" stroke-width="1.2" />
<line x1="0" y1="670.4" x2="35" y2="670.4" stroke="#e2e2e2" stroke-width="1.2" />
<line x1="0" y1="697.1199999999999" x2="35" y2="697.1199999999999" stroke="#e2e2e2" stroke-width="1.2" />
<line x1="0" y1="723.8399999999999" x2="35" y2="723.8399999999999" stroke="#e2e2e2" stroke-width="1.2" />
<line x1="35.5" y1="352" x2="35.5" y2="376.5" stroke="#d0d0d0" stroke-width="1.1" />
<line x1="35.5" y1="376.5" x2="35.5" y2="695" stroke="#b8b8b8" stroke-width="1.1" />
<line x1="34.6" y1="563.52" x2="34.6" y2="590.24" stroke="#107c41" stroke-width="2.2" />
<path d="M32 354.5 V372.5 H14 Z" fill="#dcdcdc" stroke="none" stroke-width="1" />
<text x="91.0" y="371.6" font-size="17.8" fill="#3b3b3b" font-weight="normal" font-style="normal" text-anchor="middle" font-family='"Liberation Sans", sans-serif' textLength="11.3" lengthAdjust="spacingAndGlyphs" >A</text>
<text x="209.3" y="371.6" font-size="17.8" fill="#3b3b3b" font-weight="normal" font-style="normal" text-anchor="middle" font-family='"Liberation Sans", sans-serif' textLength="10.6" lengthAdjust="spacingAndGlyphs" >B</text>
<text x="329.8" y="371.6" font-size="17.8" fill="#3b3b3b" font-weight="normal" font-style="normal" text-anchor="middle" font-family='"Liberation Sans", sans-serif' textLength="10.4" lengthAdjust="spacingAndGlyphs" >C</text>
<text x="466.3" y="371.6" font-size="17.8" fill="#3b3b3b" font-weight="normal" font-style="normal" text-anchor="middle" font-family='"Liberation Sans", sans-serif' textLength="12.0" lengthAdjust="spacingAndGlyphs" >D</text>
<text x="611.5" y="371.6" font-size="17.8" fill="#3b3b3b" font-weight="normal" font-style="normal" text-anchor="middle" font-family='"Liberation Sans", sans-serif' textLength="9.5" lengthAdjust="spacingAndGlyphs" >E</text>
<text x="724.0" y="371.6" font-size="17.8" fill="#107c41" font-weight="normal" font-style="normal" text-anchor="middle" font-family='"Liberation Sans", sans-serif' textLength="9.0" lengthAdjust="spacingAndGlyphs" >F</text>
<text x="812.7" y="371.6" font-size="17.8" fill="#3b3b3b" font-weight="normal" font-style="normal" text-anchor="middle" font-family='"Liberation Sans", sans-serif' textLength="12.3" lengthAdjust="spacingAndGlyphs" >G</text>
<text x="901.2" y="371.6" font-size="17.8" fill="#3b3b3b" font-weight="normal" font-style="normal" text-anchor="middle" font-family='"Liberation Sans", sans-serif' textLength="12.2" lengthAdjust="spacingAndGlyphs" >H</text>
<text x="988.7" y="371.6" font-size="17.8" fill="#3b3b3b" font-weight="normal" font-style="normal" text-anchor="middle" font-family='"Liberation Sans", sans-serif' textLength="4.9" lengthAdjust="spacingAndGlyphs" >I</text>
<text x="18.0" y="397.2" font-size="18.2" fill="#3b3b3b" font-weight="normal" font-style="normal" text-anchor="middle" font-family='"Liberation Sans", sans-serif' textLength="9.6" lengthAdjust="spacingAndGlyphs" >1</text>
<text x="18.0" y="423.9" font-size="18.2" fill="#3b3b3b" font-weight="normal" font-style="normal" text-anchor="middle" font-family='"Liberation Sans", sans-serif' textLength="9.6" lengthAdjust="spacingAndGlyphs" >2</text>
<text x="18.0" y="450.61999999999995" font-size="18.2" fill="#3b3b3b" font-weight="normal" font-style="normal" text-anchor="middle" font-family='"Liberation Sans", sans-serif' textLength="9.6" lengthAdjust="spacingAndGlyphs" >3</text>
<text x="18.0" y="477.34" font-size="18.2" fill="#3b3b3b" font-weight="normal" font-style="normal" text-anchor="middle" font-family='"Liberation Sans", sans-serif' textLength="9.6" lengthAdjust="spacingAndGlyphs" >4</text>
<text x="18.0" y="504.06" font-size="18.2" fill="#3b3b3b" font-weight="normal" font-style="normal" text-anchor="middle" font-family='"Liberation Sans", sans-serif' textLength="9.6" lengthAdjust="spacingAndGlyphs" >5</text>
<text x="18.0" y="530.78" font-size="18.2" fill="#3b3b3b" font-weight="normal" font-style="normal" text-anchor="middle" font-family='"Liberation Sans", sans-serif' textLength="9.6" lengthAdjust="spacingAndGlyphs" >6</text>
<text x="18.0" y="557.5" font-size="18.2" fill="#3b3b3b" font-weight="normal" font-style="normal" text-anchor="middle" font-family='"Liberation Sans", sans-serif' textLength="9.6" lengthAdjust="spacingAndGlyphs" >7</text>
<text x="18.0" y="584.22" font-size="18.2" fill="#107c41" font-weight="normal" font-style="normal" text-anchor="middle" font-family='"Liberation Sans", sans-serif' textLength="9.6" lengthAdjust="spacingAndGlyphs" >8</text>
<text x="18.0" y="610.94" font-size="18.2" fill="#3b3b3b" font-weight="normal" font-style="normal" text-anchor="middle" font-family='"Liberation Sans", sans-serif' textLength="9.6" lengthAdjust="spacingAndGlyphs" >9</text>
<text x="18.0" y="637.6600000000001" font-size="18.2" fill="#3b3b3b" font-weight="normal" font-style="normal" text-anchor="middle" font-family='"Liberation Sans", sans-serif' textLength="19.2" lengthAdjust="spacingAndGlyphs" >10</text>
<text x="18.0" y="664.38" font-size="18.2" fill="#3b3b3b" font-weight="normal" font-style="normal" text-anchor="middle" font-family='"Liberation Sans", sans-serif' textLength="19.2" lengthAdjust="spacingAndGlyphs" >11</text>
<text x="18.0" y="691.1" font-size="18.2" fill="#3b3b3b" font-weight="normal" font-style="normal" text-anchor="middle" font-family='"Liberation Sans", sans-serif' textLength="19.2" lengthAdjust="spacingAndGlyphs" >12</text>
<line x1="148.0" y1="376.5" x2="148.0" y2="695" stroke="#dcdcdc" stroke-width="1.3" />
<line x1="270.5" y1="376.5" x2="270.5" y2="695" stroke="#dcdcdc" stroke-width="1.3" />
<line x1="389.5" y1="376.5" x2="389.5" y2="695" stroke="#dcdcdc" stroke-width="1.3" />
<line x1="543.4" y1="376.5" x2="543.4" y2="695" stroke="#dcdcdc" stroke-width="1.3" />
<line x1="679.7" y1="376.5" x2="679.7" y2="695" stroke="#dcdcdc" stroke-width="1.3" />
<line x1="768.6" y1="376.5" x2="768.6" y2="695" stroke="#dcdcdc" stroke-width="1.3" />
<line x1="856.8" y1="376.5" x2="856.8" y2="695" stroke="#dcdcdc" stroke-width="1.3" />
<line x1="945.0" y1="376.5" x2="945.0" y2="695" stroke="#dcdcdc" stroke-width="1.3" />
<line x1="1033.5" y1="376.5" x2="1033.5" y2="695" stroke="#dcdcdc" stroke-width="1.3" />
<line x1="35.5" y1="403.2" x2="999" y2="403.2" stroke="#dcdcdc" stroke-width="1.3" />
<line x1="35.5" y1="429.91999999999996" x2="999" y2="429.91999999999996" stroke="#dcdcdc" stroke-width="1.3" />
<line x1="35.5" y1="456.64" x2="999" y2="456.64" stroke="#dcdcdc" stroke-width="1.3" />
<line x1="35.5" y1="483.36" x2="999" y2="483.36" stroke="#dcdcdc" stroke-width="1.3" />
<line x1="35.5" y1="510.08" x2="999" y2="510.08" stroke="#dcdcdc" stroke-width="1.3" />
<line x1="35.5" y1="536.8" x2="999" y2="536.8" stroke="#dcdcdc" stroke-width="1.3" />
<line x1="35.5" y1="563.52" x2="999" y2="563.52" stroke="#dcdcdc" stroke-width="1.3" />
<line x1="35.5" y1="590.24" x2="999" y2="590.24" stroke="#dcdcdc" stroke-width="1.3" />
<line x1="35.5" y1="616.96" x2="999" y2="616.96" stroke="#dcdcdc" stroke-width="1.3" />
<line x1="35.5" y1="643.68" x2="999" y2="643.68" stroke="#dcdcdc" stroke-width="1.3" />
<line x1="35.5" y1="670.4" x2="999" y2="670.4" stroke="#dcdcdc" stroke-width="1.3" />
<line x1="35.5" y1="697.1199999999999" x2="999" y2="697.1199999999999" stroke="#dcdcdc" stroke-width="1.3" />
<line x1="35.5" y1="723.8399999999999" x2="999" y2="723.8399999999999" stroke="#dcdcdc" stroke-width="1.3" />
<rect x="36" y="376.5" width="643.7" height="26.69999999999999" fill="#4472c4" stroke="none" stroke-width="1" rx="0" />
<rect x="36" y="403.2" width="643.7" height="26.71999999999997" fill="#d9e1f2" stroke="none" stroke-width="1" rx="0" />
<rect x="36" y="429.91999999999996" width="643.7" height="26.720000000000027" fill="#ffffff" stroke="none" stroke-width="1" rx="0" />
<line x1="148.0" y1="429.91999999999996" x2="148.0" y2="456.64" stroke="#dcdcdc" stroke-width="1.3" />
<line x1="270.5" y1="429.91999999999996" x2="270.5" y2="456.64" stroke="#dcdcdc" stroke-width="1.3" />
<line x1="389.5" y1="429.91999999999996" x2="389.5" y2="456.64" stroke="#dcdcdc" stroke-width="1.3" />
<line x1="543.4" y1="429.91999999999996" x2="543.4" y2="456.64" stroke="#dcdcdc" stroke-width="1.3" />
<rect x="36" y="456.64" width="643.7" height="26.720000000000027" fill="#d9e1f2" stroke="none" stroke-width="1" rx="0" />
<rect x="36" y="483.36" width="643.7" height="26.71999999999997" fill="#ffffff" stroke="none" stroke-width="1" rx="0" />
<line x1="148.0" y1="483.36" x2="148.0" y2="510.08" stroke="#dcdcdc" stroke-width="1.3" />
<line x1="270.5" y1="483.36" x2="270.5" y2="510.08" stroke="#dcdcdc" stroke-width="1.3" />
<line x1="389.5" y1="483.36" x2="389.5" y2="510.08" stroke="#dcdcdc" stroke-width="1.3" />
<line x1="543.4" y1="483.36" x2="543.4" y2="510.08" stroke="#dcdcdc" stroke-width="1.3" />
<rect x="36" y="510.08" width="643.7" height="26.71999999999997" fill="#d9e1f2" stroke="none" stroke-width="1" rx="0" />
<rect x="36" y="536.8" width="643.7" height="26.720000000000027" fill="#ffffff" stroke="none" stroke-width="1" rx="0" />
<line x1="148.0" y1="536.8" x2="148.0" y2="563.52" stroke="#dcdcdc" stroke-width="1.3" />
<line x1="270.5" y1="536.8" x2="270.5" y2="563.52" stroke="#dcdcdc" stroke-width="1.3" />
<line x1="389.5" y1="536.8" x2="389.5" y2="563.52" stroke="#dcdcdc" stroke-width="1.3" />
<line x1="543.4" y1="536.8" x2="543.4" y2="563.52" stroke="#dcdcdc" stroke-width="1.3" />
<line x1="36" y1="403.2" x2="679.7" y2="403.2" stroke="#a8bde6" stroke-width="1.3" />
<line x1="36" y1="429.91999999999996" x2="679.7" y2="429.91999999999996" stroke="#93acdc" stroke-width="1.3" />
<line x1="36" y1="456.64" x2="679.7" y2="456.64" stroke="#93acdc" stroke-width="1.3" />
<line x1="36" y1="483.36" x2="679.7" y2="483.36" stroke="#93acdc" stroke-width="1.3" />
<line x1="36" y1="510.08" x2="679.7" y2="510.08" stroke="#93acdc" stroke-width="1.3" />
<line x1="36" y1="536.8" x2="679.7" y2="536.8" stroke="#93acdc" stroke-width="1.3" />
<line x1="36" y1="563.52" x2="679.7" y2="563.52" stroke="#93acdc" stroke-width="1.3" />
<line x1="679.4000000000001" y1="403.2" x2="679.4000000000001" y2="563.52" stroke="#93acdc" stroke-width="1.3" />
<text x="38.6" y="397.5" font-size="18.3" fill="#ffffff" font-weight="bold" font-style="normal" text-anchor="start" font-family='"Liberation Sans", sans-serif' textLength="82.7" lengthAdjust="spacingAndGlyphs" >Order No.</text>
<text x="151.0" y="397.5" font-size="18.3" fill="#ffffff" font-weight="bold" font-style="normal" text-anchor="start" font-family='"Liberation Sans", sans-serif' textLength="93.5" lengthAdjust="spacingAndGlyphs" >Order Item</text>
<text x="273.40000000000003" y="397.5" font-size="18.3" fill="#ffffff" font-weight="bold" font-style="normal" text-anchor="start" font-family='"Liberation Sans", sans-serif' textLength="89.7" lengthAdjust="spacingAndGlyphs" >Order Qty.</text>
<text x="392.3" y="397.5" font-size="18.3" fill="#ffffff" font-weight="bold" font-style="normal" text-anchor="start" font-family='"Liberation Sans", sans-serif' textLength="120.9" lengthAdjust="spacingAndGlyphs" >Order Severity</text>
<text x="546.5" y="397.5" font-size="18.3" fill="#ffffff" font-weight="bold" font-style="normal" text-anchor="start" font-family='"Liberation Sans", sans-serif' textLength="107.9" lengthAdjust="spacingAndGlyphs" >Order Status</text>
<rect x="125.39999999999999" y="379.3" width="21.7" height="21.9" fill="url(#fbtn)" stroke="#d6d6d6" stroke-width="0.6" rx="0" />
<path d="M131.7 387.6 H141.0 L136.35 392.9 Z" fill="#5a5a5a" stroke="none" stroke-width="1" />
<rect x="247.8" y="379.3" width="21.7" height="21.9" fill="url(#fbtn)" stroke="#d6d6d6" stroke-width="0.6" rx="0" />
<path d="M254.1 387.6 H263.4 L258.75 392.9 Z" fill="#5a5a5a" stroke="none" stroke-width="1" />
<rect x="366.40000000000003" y="379.3" width="21.7" height="21.9" fill="url(#fbtn)" stroke="#d6d6d6" stroke-width="0.6" rx="0" />
<path d="M372.70000000000005 387.6 H382.0 L377.35 392.9 Z" fill="#5a5a5a" stroke="none" stroke-width="1" />
<rect x="521.3" y="379.3" width="21.7" height="21.9" fill="url(#fbtn)" stroke="#d6d6d6" stroke-width="0.6" rx="0" />
<path d="M527.6 387.6 H536.9 L532.25 392.9 Z" fill="#5a5a5a" stroke="none" stroke-width="1" />
<rect x="657.0999999999999" y="379.3" width="21.7" height="21.9" fill="url(#fbtn)" stroke="#d6d6d6" stroke-width="0.6" rx="0" />
<path d="M663.4 387.6 H672.6999999999999 L668.05 392.9 Z" fill="#5a5a5a" stroke="none" stroke-width="1" />
<text x="38.8" y="423.7" font-size="18.3" fill="#000000" font-weight="normal" font-style="normal" text-anchor="start" font-family='"Liberation Sans", sans-serif' textLength="66.3" lengthAdjust="spacingAndGlyphs" >AW-001</text>
<text x="151.0" y="423.7" font-size="18.3" fill="#000000" font-weight="normal" font-style="normal" text-anchor="start" font-family='"Liberation Sans", sans-serif' textLength="56.099999999999994" lengthAdjust="spacingAndGlyphs" >Pencils</text>
<text x="385.7" y="423.7" font-size="18.3" fill="#000000" font-weight="normal" font-style="normal" text-anchor="end" font-family='"Liberation Sans", sans-serif' textLength="19.6" lengthAdjust="spacingAndGlyphs" >98</text>
<text x="392.3" y="423.7" font-size="18.3" fill="#000000" font-weight="normal" font-style="normal" text-anchor="start" font-family='"Liberation Sans", sans-serif' textLength="69.8" lengthAdjust="spacingAndGlyphs" >Medium</text>
<text x="546.5" y="423.7" font-size="18.3" fill="#000000" font-weight="normal" font-style="normal" text-anchor="start" font-family='"Liberation Sans", sans-serif' textLength="81.8" lengthAdjust="spacingAndGlyphs" >Approved</text>
<text x="38.8" y="450.41999999999996" font-size="18.3" fill="#000000" font-weight="normal" font-style="normal" text-anchor="start" font-family='"Liberation Sans", sans-serif' textLength="66.3" lengthAdjust="spacingAndGlyphs" >AW-002</text>
<text x="151.0" y="450.41999999999996" font-size="18.3" fill="#000000" font-weight="normal" font-style="normal" text-anchor="start" font-family='"Liberation Sans", sans-serif' textLength="38.3" lengthAdjust="spacingAndGlyphs" >Pens</text>
<text x="385.7" y="450.41999999999996" font-size="18.3" fill="#000000" font-weight="normal" font-style="normal" text-anchor="end" font-family='"Liberation Sans", sans-serif' textLength="29.1" lengthAdjust="spacingAndGlyphs" >100</text>
<text x="392.3" y="450.41999999999996" font-size="18.3" fill="#000000" font-weight="normal" font-style="normal" text-anchor="start" font-family='"Liberation Sans", sans-serif' textLength="32.8" lengthAdjust="spacingAndGlyphs" >Low</text>
<text x="546.5" y="450.41999999999996" font-size="18.3" fill="#000000" font-weight="normal" font-style="normal" text-anchor="start" font-family='"Liberation Sans", sans-serif' textLength="36.9" lengthAdjust="spacingAndGlyphs" >New</text>
<text x="38.8" y="477.14" font-size="18.3" fill="#000000" font-weight="normal" font-style="normal" text-anchor="start" font-family='"Liberation Sans", sans-serif' textLength="66.3" lengthAdjust="spacingAndGlyphs" >AW-003</text>
<text x="151.0" y="477.14" font-size="18.3" fill="#000000" font-weight="normal" font-style="normal" text-anchor="start" font-family='"Liberation Sans", sans-serif' textLength="47.8" lengthAdjust="spacingAndGlyphs" >Brush</text>
<text x="385.7" y="477.14" font-size="18.3" fill="#000000" font-weight="normal" font-style="normal" text-anchor="end" font-family='"Liberation Sans", sans-serif' textLength="19.6" lengthAdjust="spacingAndGlyphs" >23</text>
<text x="392.3" y="477.14" font-size="18.3" fill="#000000" font-weight="normal" font-style="normal" text-anchor="start" font-family='"Liberation Sans", sans-serif' textLength="32.8" lengthAdjust="spacingAndGlyphs" >Low</text>
<text x="546.5" y="477.14" font-size="18.3" fill="#000000" font-weight="normal" font-style="normal" text-anchor="start" font-family='"Liberation Sans", sans-serif' textLength="81.8" lengthAdjust="spacingAndGlyphs" >Approved</text>
<text x="38.8" y="503.86" font-size="18.3" fill="#000000" font-weight="normal" font-style="normal" text-anchor="start" font-family='"Liberation Sans", sans-serif' textLength="66.3" lengthAdjust="spacingAndGlyphs" >AW-004</text>
<text x="151.0" y="503.86" font-size="18.3" fill="#000000" font-weight="normal" font-style="normal" text-anchor="start" font-family='"Liberation Sans", sans-serif' textLength="54.099999999999994" lengthAdjust="spacingAndGlyphs" >Stencil</text>
<text x="385.7" y="503.86" font-size="18.3" fill="#000000" font-weight="normal" font-style="normal" text-anchor="end" font-family='"Liberation Sans", sans-serif' textLength="19.6" lengthAdjust="spacingAndGlyphs" >44</text>
<text x="392.3" y="503.86" font-size="18.3" fill="#000000" font-weight="normal" font-style="normal" text-anchor="start" font-family='"Liberation Sans", sans-serif' textLength="69.8" lengthAdjust="spacingAndGlyphs" >Medium</text>
<text x="546.5" y="503.86" font-size="18.3" fill="#000000" font-weight="normal" font-style="normal" text-anchor="start" font-family='"Liberation Sans", sans-serif' textLength="36.9" lengthAdjust="spacingAndGlyphs" >New</text>
<text x="38.8" y="530.5799999999999" font-size="18.3" fill="#000000" font-weight="normal" font-style="normal" text-anchor="start" font-family='"Liberation Sans", sans-serif' textLength="66.3" lengthAdjust="spacingAndGlyphs" >AW-005</text>
<text x="151.0" y="530.5799999999999" font-size="18.3" fill="#000000" font-weight="normal" font-style="normal" text-anchor="start" font-family='"Liberation Sans", sans-serif' textLength="75.8" lengthAdjust="spacingAndGlyphs" >Compass</text>
<text x="385.7" y="530.5799999999999" font-size="18.3" fill="#000000" font-weight="normal" font-style="normal" text-anchor="end" font-family='"Liberation Sans", sans-serif' textLength="19.6" lengthAdjust="spacingAndGlyphs" >55</text>
<text x="392.3" y="530.5799999999999" font-size="18.3" fill="#000000" font-weight="normal" font-style="normal" text-anchor="start" font-family='"Liberation Sans", sans-serif' textLength="32.8" lengthAdjust="spacingAndGlyphs" >Low</text>
<text x="546.5" y="530.5799999999999" font-size="18.3" fill="#000000" font-weight="normal" font-style="normal" text-anchor="start" font-family='"Liberation Sans", sans-serif' textLength="81.8" lengthAdjust="spacingAndGlyphs" >Approved</text>
<text x="38.8" y="557.3" font-size="18.3" fill="#000000" font-weight="normal" font-style="normal" text-anchor="start" font-family='"Liberation Sans", sans-serif' textLength="66.3" lengthAdjust="spacingAndGlyphs" >AW-006</text>
<text x="151.0" y="557.3" font-size="18.3" fill="#000000" font-weight="normal" font-style="normal" text-anchor="start" font-family='"Liberation Sans", sans-serif' textLength="90.39999999999999" lengthAdjust="spacingAndGlyphs" >Notebooks</text>
<text x="385.7" y="557.3" font-size="18.3" fill="#000000" font-weight="normal" font-style="normal" text-anchor="end" font-family='"Liberation Sans", sans-serif' textLength="19.6" lengthAdjust="spacingAndGlyphs" >20</text>
<text x="392.3" y="557.3" font-size="18.3" fill="#000000" font-weight="normal" font-style="normal" text-anchor="start" font-family='"Liberation Sans", sans-serif' textLength="36.5" lengthAdjust="spacingAndGlyphs" >High</text>
<text x="546.5" y="557.3" font-size="18.3" fill="#000000" font-weight="normal" font-style="normal" text-anchor="start" font-family='"Liberation Sans", sans-serif' textLength="36.9" lengthAdjust="spacingAndGlyphs" >New</text>
<rect x="676.5" y="557.5" width="1.8" height="1.8" fill="#3b52a4" stroke="none" stroke-width="1" rx="0" />
<rect x="676.5" y="560" width="1.8" height="1.8" fill="#3b52a4" stroke="none" stroke-width="1" rx="0" />
<rect x="674" y="560" width="1.8" height="1.8" fill="#3b52a4" stroke="none" stroke-width="1" rx="0" />
<rect x="678.2" y="557.5" width="1.8" height="1.8" fill="#3b52a4" stroke="none" stroke-width="1" rx="0" />
<rect x="678.2" y="560" width="1.8" height="1.8" fill="#3b52a4" stroke="none" stroke-width="1" rx="0" />
<rect x="679.3" y="563.4" width="89.6" height="27.3" fill="none" stroke="#1b6b3a" stroke-width="2.0" rx="0" />
<rect x="763.2" y="585.6" width="8.5" height="8.5" fill="#ffffff" stroke="none" stroke-width="1" rx="0" />
<rect x="764.8" y="587.2" width="5.8" height="5.8" fill="#1b6b3a" stroke="none" stroke-width="1" rx="0" />
</svg></body></html>
